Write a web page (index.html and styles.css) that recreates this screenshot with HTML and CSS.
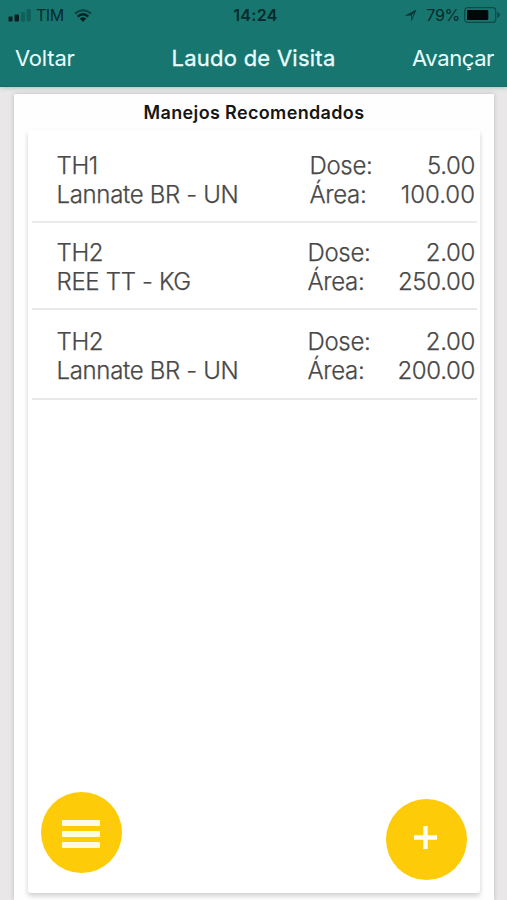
FILE: index.html
```html
<!DOCTYPE html>
<html lang="pt-BR">
<head>
<meta charset="utf-8">
<title>Laudo de Visita</title>
<link rel="stylesheet" href="styles.css">
</head>
<body>
<header class="header">
  <div class="status">
    <div class="status-left">
      <svg class="signal" width="24" height="13" viewBox="0 0 24 13"><rect x=".5" y="7.5" width="4" height="5" rx="1" fill="#071f20"/><rect x="6.5" y="5.5" width="4.5" height="7" rx="1" fill="#071f20"/><rect x="13" y="3" width="4" height="9.5" rx="1" fill="#0f5f5a"/><rect x="18.5" y="0" width="4.5" height="12.5" rx="1" fill="#0f5f5a"/></svg>
      <span class="carrier">TIM</span>
      <svg class="wifi" width="18" height="13" viewBox="0 0 18 13" fill="none"><path d="M1 4.5Q9-2 17 4.5" stroke="#0b4949" stroke-width="2.3"/><path d="M3.7 7.6Q9 3 14.3 7.6" stroke="#071f20" stroke-width="2.4"/><path d="M5.7 9.6Q9 6.8 12.3 9.6L9 13Z" fill="#071f20"/></svg>
    </div>
    <span class="clock">14:24</span>
    <div class="status-right">
      <svg class="location" width="13" height="13" viewBox="0 0 13 13"><path d="M.5 6.8 12.5.5 7.5 12.5 7 6.5ZM7.8 6l.3 3 2-5.3Z" fill="#083638" fill-rule="evenodd"/></svg>
      <span class="percent">79%</span>
      <svg class="battery" width="36" height="16" viewBox="0 0 36 16"><rect x=".7" y=".7" width="31" height="14.6" rx="3" fill="none" stroke="#0b4c4a" stroke-width="1.3"/><rect x="3" y="3" width="21.3" height="10" rx="1" fill="#020809"/><path d="M33.2 5Q36 6 36 8t-2.8 3Z" fill="#0b4c4a"/></svg>
    </div>
  </div>
  <nav class="nav">
    <span class="back">Voltar</span>
    <span class="title">Laudo de Visita</span>
    <span class="next">Avançar</span>
  </nav>
</header>
<main class="page">
  <h1 class="heading">Manejos Recomendados</h1>
  <section class="list">
    <article class="row first">
      <div class="product"><div>TH1</div><div>Lannate BR - UN</div></div>
      <div class="labels"><div>Dose:</div><div>Área:</div></div>
      <div class="values"><div>5.00</div><div class="wide">100.00</div></div>
    </article>
    <article class="row second">
      <div class="product"><div>TH2</div><div>REE TT - KG</div></div>
      <div class="labels"><div>Dose:</div><div>Área:</div></div>
      <div class="values"><div>2.00</div><div>250.00</div></div>
    </article>
    <article class="row third">
      <div class="product"><div>TH2</div><div>Lannate BR - UN</div></div>
      <div class="labels"><div>Dose:</div><div>Área:</div></div>
      <div class="values"><div>2.00</div><div>200.00</div></div>
    </article>
    <div class="actions">
      <button class="fab menu" aria-label="Menu"><svg width="38" height="28" viewBox="0 0 38 28" fill="#fffbe2"><rect width="38" height="6" rx=".8"/><rect y="11" width="38" height="6" rx=".8"/><rect y="22" width="38" height="6" rx=".8"/></svg></button>
      <button class="fab add" aria-label="Adicionar"><svg width="23" height="23" viewBox="0 0 23 23"><path d="M11.5 0v23M0 11.5h23" stroke="#fffef2" stroke-width="4.4"/></svg></button>
    </div>
  </section>
</main>
</body>
</html>
```
FILE: styles.css
```css
* { box-sizing: border-box; }
body {
  margin: 0;
  height: 900px;
  overflow: hidden;
  display: flex;
  flex-direction: column;
  background: #e9e7e8;
  font-family: Inter, "Liberation Sans", sans-serif;
}
.header {
  height: 87px;
  flex: none;
  background: #187670;
  border-bottom: 1px solid #1d6a65;
  box-shadow: 0 1px 4px #a9c5bf;
}
.status {
  height: 30px;
  display: grid;
  grid-template-columns: 1fr auto 1fr;
  align-items: center;
  padding: 0 7px 0 8px;
  color: #072a2c;
  font-size: 16px;
  line-height: 30px;
}
.status-left, .status-right { display: flex; align-items: center; }
.status-right { justify-content: flex-end; }
.carrier { margin-left: 4px; letter-spacing: -.5px; }
.wifi { margin-left: 10px; }
.clock { margin-left: 3px; font-weight: 600; letter-spacing: .3px; }
.location { margin-right: 9px; }
.percent { margin-right: 4px; letter-spacing: -.3px; }
.nav {
  height: 56px;
  display: grid;
  grid-template-columns: 1fr auto 1fr;
  align-items: center;
  padding: 0 13px 0 15px;
  color: #e9ffff;
  font-size: 22px;
  line-height: 56px;
}
.back { letter-spacing: -.2px; }
.title { margin-right: 2px; font-weight: 400; letter-spacing: .25px; -webkit-text-stroke: .3px currentColor; }
.next { text-align: right; letter-spacing: -.4px; }
.page {
  flex: 1;
  margin: 7px 13px 0 14px;
  background: #fefefe;
  box-shadow: 0 0 4px #bbb8b9;
}
.heading {
  height: 36px;
  margin: 0;
  font-size: 18px;
  font-weight: 600;
  line-height: 37px;
  letter-spacing: .35px;
  text-align: center;
  color: #151515;
}
.list {
  height: 763px;
  margin: 0 14px;
  display: flex;
  flex-direction: column;
  background: #fff;
  border-radius: 3px;
  box-shadow: 0 3px 5px #d0d0d0;
}
.row {
  flex: none;
  display: grid;
  grid-template-columns: 251px 70px 1fr;
  margin: 0 3px 0 4px;
  padding: 15px 2px 12px 24.5px;
  border-bottom: 2px solid #e8e8e8;
  color: #484848;
  font-size: 24px;
  font-weight: 350;
  line-height: 29px;
  letter-spacing: -.33px;
  white-space: nowrap;
  -webkit-text-stroke: .25px currentColor;
}
.first {
  height: 93px;
  padding-top: 21px;
  grid-template-columns: 253px 70px 1fr;
  border-bottom-color: #ebebeb;
}
.second { height: 87px; }
.third { height: 90px; padding-top: 17px; }
.values { text-align: right; }
.wide { letter-spacing: 0; }
.actions {
  margin-top: auto;
  display: flex;
  justify-content: space-between;
  align-items: flex-end;
  padding: 0 13px 13px 13px;
}
.fab {
  width: 81px;
  height: 81px;
  padding: 0;
  border: 0;
  border-radius: 50%;
  display: grid;
  place-items: center;
  background: #fecb08;
}
.menu { margin-bottom: 7px; padding: 2px 2px 0 0; }
.add { padding: 0 2px 4px 0; }
```
